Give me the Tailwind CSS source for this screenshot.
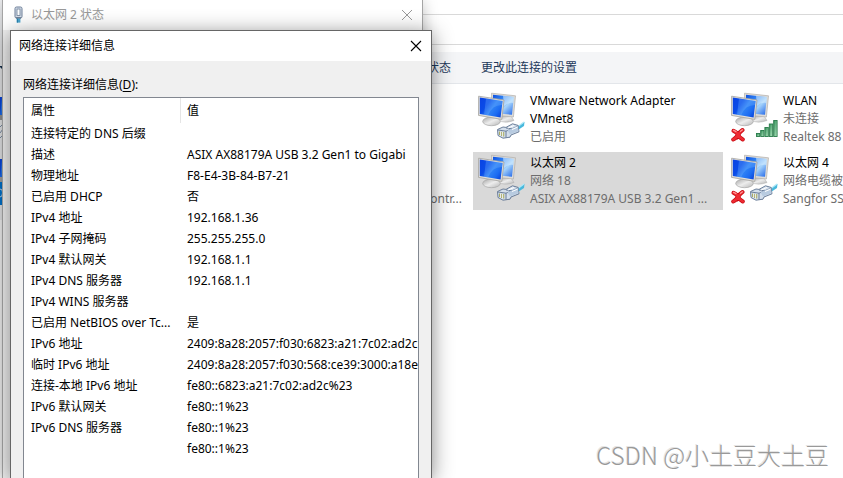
<!DOCTYPE html>
<html lang="zh-CN">
<head>
<meta charset="utf-8">
<meta name="viewport" content="width=device-width, initial-scale=1">
<title>网络连接</title>
<script src="https://cdn.jsdelivr.net/npm/@tailwindcss/browser@4"></script>
</head>
<body class="relative h-screen overflow-hidden bg-white font-['Noto_Sans','Noto_Sans_CJK_SC',sans-serif] text-[12px] leading-[18px] text-black">

<svg class="absolute h-0 w-0" aria-hidden="true">
  <defs>
    <linearGradient id="screen" x1="0" y1="0.2" x2="1" y2="0.8">
      <stop offset="0" stop-color="#0a45e4"/><stop offset="0.3" stop-color="#0a4ce8"/>
      <stop offset="0.55" stop-color="#2f82f6"/><stop offset="0.8" stop-color="#1c6cf2"/><stop offset="1" stop-color="#0b47dc"/>
    </linearGradient>
    <linearGradient id="screenBack" x1="0" y1="0" x2="1" y2="1">
      <stop offset="0" stop-color="#0d4fe0"/><stop offset="0.3" stop-color="#2f80f2"/>
      <stop offset="0.6" stop-color="#a5d3fb"/><stop offset="1" stop-color="#1d63e8"/>
    </linearGradient>
    <linearGradient id="stand" x1="0" y1="0" x2="1" y2="1">
      <stop offset="0" stop-color="#a5a5a5"/><stop offset="0.5" stop-color="#ededed"/><stop offset="1" stop-color="#b5b5b5"/>
    </linearGradient>
    <linearGradient id="bar" x1="0" y1="0" x2="1" y2="1">
      <stop offset="0" stop-color="#2f8f57"/><stop offset="1" stop-color="#b5e8c2"/>
    </linearGradient>
    <symbol id="monitors" viewBox="0 0 50 52">
      <path d="M20 28 Q26 32 36 28.5 L33 24 L23 24Z" fill="url(#stand)" stroke="#aaa" stroke-width=".5"/>
      <path d="M13.5 1.2 L37.5 3.8 L35.4 25 L14 23Z" fill="#dedcd8" stroke="#b1afac" stroke-width=".7"/>
      <path d="M15 2.7 L35.8 5 L34 22.8 L15 21Z" fill="url(#screenBack)"/>
      <path d="M25 3.8 L35.8 5 L35.3 11 Q30 10 26 14Z" fill="#d9efff" opacity=".55"/>
      <path d="M11 24 L18 25 L19 29 L10 29Z" fill="#aaa"/>
      <ellipse cx="13.5" cy="29.4" rx="8.8" ry="4.3" fill="url(#stand)" stroke="#a7a7a7" stroke-width=".7"/>
      <path d="M.6 4.2 L26 8 L23.8 27.4 L.5 23.4Z" fill="#e2e0dc" stroke="#a5a3a0" stroke-width=".8"/>
      <path d="M1.8 5.6 L24.6 9 L22.6 25.5 L1.8 22Z" fill="url(#screen)"/>
      <path d="M8 6.5 L24.6 9 L24 13 Q14 13 10 23.4 L6 22.7Z" fill="#7ab8ff" opacity=".3"/>
    </symbol>
    <symbol id="plug" viewBox="0 0 50 52">
      <path d="M38 36 L46.5 29.8 L46 34 L40 38Z" fill="#48b8dc"/>
      <path d="M38 36 L46 30" stroke="#aee8f8" stroke-width="1.2"/>
      <path d="M19.5 37.5 L25 35 L28 35.4 L34.5 31.8 L40 33.4 L41 39.8 L33 43 L32 45.2 L25 46.2 L20 43.5Z" fill="#d4dfec" stroke="#5f7390" stroke-width=".9"/>
      <path d="M20 38 L28 39.2 L40.5 34 M28 39.2 L28 45.5 M28 36 L34 36.8" fill="none" stroke="#5f7390" stroke-width=".9"/>
      <path d="M29.5 38.2 L40 34 L40.5 39 L32 42.4Z" fill="#b8cbe0"/>
      <path d="M30 36 L36 33.5 M34 37.5 L39.5 35.2" stroke="#fff" stroke-width="1"/>
      <path d="M21.7 39.5 V43 M23.7 39.8 V44 M25.7 40 V44.5" stroke="#9e9e45" stroke-width="1"/>
      <path d="M22.7 39.5 V43.5 M24.7 40 V44.5" stroke="#fff" stroke-width=".7"/>
    </symbol>
    <symbol id="signal" viewBox="0 0 50 52">
      <g fill="url(#bar)" stroke="#287a49" stroke-width=".9">
        <rect x="25.5" y="41.5" width="3.2" height="3"/><rect x="29.7" y="38.5" width="3.2" height="6"/>
        <rect x="33.9" y="35.5" width="3.4" height="9"/><rect x="38.3" y="32" width="3.4" height="12.5"/>
        <rect x="42.7" y="28.5" width="3.4" height="16"/>
      </g>
    </symbol>
    <symbol id="off" viewBox="0 0 50 52">
      <path d="M2.5 38.8 Q6 40 7 43 Q9 39.5 11.5 38 M2.2 47.5 Q4.5 46.5 7 43 Q8.5 45.5 11.8 47.5" fill="none" stroke="#c80a12" stroke-width="4" stroke-linecap="round"/>
      <path d="M2.5 38.8 Q6 40 7 43 Q9 39.5 11.5 38 M2.2 47.5 Q4.5 46.5 7 43 Q8.5 45.5 11.8 47.5" fill="none" stroke="#ee2b32" stroke-width="2.6" stroke-linecap="round"/>
      <path d="M2.5 38.3 L5 39.6 M9.5 39.3 L11.5 37.8" stroke="#ff9a98" stroke-width="1.2" stroke-linecap="round"/>
    </symbol>
  </defs>
</svg>

<!-- Explorer window -->
<main class="flex h-full flex-col overflow-hidden">
  <div class="h-[15px] shrink-0 border-b border-[#d9d9d9]"></div>
  <div class="h-[30px] shrink-0 border-b border-[#d9d9d9]"></div>
  <nav class="mt-[7px] flex h-8 shrink-0 items-center gap-[30px] border-b border-[#e3e6ea] bg-[#f4f5f7] pl-[355px] text-[#1e395b]">
    <button type="button" class="whitespace-nowrap">查看此连接的状态</button>
    <button type="button" class="whitespace-nowrap">更改此连接的设置</button>
  </nav>
  <section class="mt-[6px] grid shrink-0 auto-rows-[58px] grid-cols-[250px_250px_minmax(0,250px)] gap-x-[3px] gap-y-1 overflow-hidden pl-[220px]" aria-label="网络连接">
    <article class="col-start-2 flex gap-[2px] pt-[2px] pr-5 pl-[5px]">
      <svg class="h-[52px] w-[50px] shrink-0"><use href="#monitors"/><use href="#plug"/></svg>
      <div class="min-w-0 text-[#6d6d6d]">
        <h2 class="text-black">VMware Network Adapter VMnet8</h2>
        <p>已启用</p>
      </div>
    </article>
    <article class="flex gap-[2px] overflow-hidden pt-[2px] pl-[5px]">
      <svg class="h-[52px] w-[50px] shrink-0"><use href="#monitors"/><use href="#signal"/><use href="#off"/></svg>
      <div class="min-w-0 whitespace-nowrap text-[#6d6d6d]">
        <h2 class="text-black">WLAN</h2>
        <p>未连接</p>
        <p>Realtek 88</p>
      </div>
    </article>
    <article class="col-start-1 flex items-end justify-end pr-2 pb-[2px] text-[#6d6d6d]">
      <p>Contr...</p>
    </article>
    <article class="flex gap-[2px] bg-[#d9d9d9] pt-[2px] pl-[5px]">
      <svg class="h-[52px] w-[50px] shrink-0"><use href="#monitors"/><use href="#plug"/></svg>
      <div class="min-w-0 whitespace-nowrap text-[#6d6d6d]">
        <h2 class="text-black">以太网 2</h2>
        <p>网络 18</p>
        <p>ASIX AX88179A USB 3.2 Gen1 ...</p>
      </div>
    </article>
    <article class="flex gap-[2px] overflow-hidden pt-[2px] pl-[5px]">
      <svg class="h-[52px] w-[50px] shrink-0"><use href="#monitors"/><use href="#plug"/><use href="#off"/></svg>
      <div class="min-w-0 whitespace-nowrap text-[#6d6d6d]">
        <h2 class="text-black">以太网 4</h2>
        <p>网络电缆被</p>
        <p>Sangfor SS</p>
      </div>
    </article>
  </section>
</main>

<!-- Parts of the navigation pane left of the dialogs -->
<svg class="absolute top-0 left-0 h-[220px] w-[3px]" viewBox="0 0 3 220" aria-hidden="true">
  <rect width="3" height="220" fill="#f0f1f3"/>
  <path d="M0 66 H3 V69 H2 L0 67Z" fill="#16324f"/>
  <rect y="97" width="3" height="18" fill="url(#screen)"/><rect y="115" width="3" height="5" fill="#999"/>
  <path d="M0 127 L3 124 M0 133 L3 129 M0 138 L3 135" stroke="#8295ad" fill="none"/>
  <rect y="159" width="3" height="18" fill="url(#screen)"/><rect y="177" width="3" height="5" fill="#aaa"/>
  <rect y="182" width="3" height="23" fill="#0078d7"/>
  <path d="M0 189 Q3 189 2.5 193 Q2.5 197 0 197" stroke="#cfe6fa" fill="none"/>
</svg>

<!-- Status window -->
<section class="absolute top-0 bottom-0 left-[2px] w-[421px] border-x border-[#a5a5a5] bg-[#f0f0f0] shadow-[0_2px_14px_rgba(0,0,0,0.25)]" aria-label="以太网 2 状态">
  <header class="flex h-[30px] items-center justify-between bg-white pr-[9px] pl-[11px] text-[#999999]">
    <div class="flex items-center gap-2">
      <svg class="h-[18px] w-[9px]" viewBox="0 0 9 18" aria-hidden="true">
        <rect x="1" y="1" width="7" height="11" rx="1.5" fill="#d5dde8" stroke="#6c7f99"/>
        <rect x="3" y="3" width="3" height="6.5" fill="#fff" stroke="#6c7f99" stroke-width=".8"/>
        <path d="M2 12 H7" stroke="#445870"/><rect x="2.6" y="12.6" width="3.8" height="4" fill="#4ba6cf"/>
        <path d="M3.5 12.6 V16.6" stroke="#2376a5" stroke-width=".8"/>
      </svg>
      <h1>以太网 2 状态</h1>
    </div>
    <button type="button" aria-label="关闭"><svg class="h-3 w-3" viewBox="0 0 12 12" aria-hidden="true"><path d="M1 1 L11 11 M11 1 L1 11" stroke="#999" fill="none"/></svg></button>
  </header>
</section>

<!-- Details dialog -->
<section class="absolute top-[30px] bottom-0 left-[10px] flex w-[422px] flex-col border border-b-0 border-[#666] bg-[#f0f0f0] shadow-[0_3px_20px_rgba(0,0,0,0.45)]" role="dialog" aria-labelledby="dialog-title">
  <header class="flex h-[30px] shrink-0 items-center justify-between bg-white pr-[9px] pl-2">
    <h1 id="dialog-title">网络连接详细信息</h1>
    <button type="button" aria-label="关闭"><svg class="h-3 w-3" viewBox="0 0 12 12" aria-hidden="true"><path d="M1 1 L11 11 M11 1 L1 11" stroke="#000" stroke-width="1.1" fill="none"/></svg></button>
  </header>
  <h2 id="list-label" class="mt-[15px] mb-[3px] pl-3">网络连接详细信息(<u class="underline-offset-2">D</u>):</h2>
  <div class="mx-3 grow overflow-hidden border border-b-0 border-[#828790] bg-white">
    <table class="w-full table-fixed border-collapse text-left whitespace-nowrap" aria-labelledby="list-label">
      <colgroup><col class="w-[156px]"><col></colgroup>
      <thead>
        <tr class="h-[25px]">
          <th class="p-0 font-normal"><div class="mr-[-1px] flex h-[25px] w-[157px] items-center border-r border-[#e5e5e5] pl-[7px]">属性</div></th>
          <th class="p-0 pl-[7px] font-normal">值</th>
        </tr>
      </thead>
      <tbody class="[&_td]:h-[21px] [&_td]:overflow-hidden [&_td]:p-0 [&_td]:pl-[7px]">
        <tr><td>连接特定的 DNS 后缀</td><td></td></tr>
        <tr><td>描述</td><td>ASIX AX88179A USB 3.2 Gen1 to Gigabi</td></tr>
        <tr><td>物理地址</td><td>F8-E4-3B-84-B7-21</td></tr>
        <tr><td>已启用 DHCP</td><td>否</td></tr>
        <tr><td>IPv4 地址</td><td>192.168.1.36</td></tr>
        <tr><td>IPv4 子网掩码</td><td>255.255.255.0</td></tr>
        <tr><td>IPv4 默认网关</td><td>192.168.1.1</td></tr>
        <tr><td>IPv4 DNS 服务器</td><td>192.168.1.1</td></tr>
        <tr><td>IPv4 WINS 服务器</td><td></td></tr>
        <tr><td>已启用 NetBIOS over Tc...</td><td>是</td></tr>
        <tr><td>IPv6 地址</td><td>2409:8a28:2057:f030:6823:a21:7c02:ad2c</td></tr>
        <tr><td>临时 IPv6 地址</td><td>2409:8a28:2057:f030:568:ce39:3000:a18e</td></tr>
        <tr><td>连接-本地 IPv6 地址</td><td>fe80::6823:a21:7c02:ad2c%23</td></tr>
        <tr><td>IPv6 默认网关</td><td>fe80::1%23</td></tr>
        <tr><td>IPv6 DNS 服务器</td><td>fe80::1%23</td></tr>
        <tr><td></td><td>fe80::1%23</td></tr>
      </tbody>
    </table>
  </div>
</section>

<!-- Watermark -->
<p class="absolute right-[14px] bottom-[6px] font-['Noto_Sans_CJK_SC',sans-serif] text-[24px] leading-[34px] font-light text-[#999] [text-shadow:-1px_-1px_0_#e4e4e4]">CSDN @小土豆大土豆</p>
</body>
</html>
